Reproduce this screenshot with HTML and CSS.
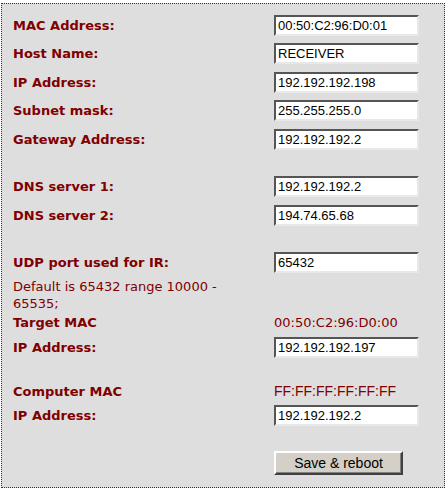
FILE: index.html
```html
<!DOCTYPE html>
<html>
<head>
<meta charset="utf-8">
<link rel="stylesheet" href="styles.css">
</head>
<body>
<form class="panel">
  <div class="row"><label class="lbl">MAC Address:</label><input class="field" value="00:50:C2:96:D0:01"></div>
  <div class="row"><label class="lbl">Host Name:</label><input class="field" value="RECEIVER"></div>
  <div class="row"><label class="lbl">IP Address:</label><input class="field" value="192.192.192.198"></div>
  <div class="row"><label class="lbl">Subnet mask:</label><input class="field" value="255.255.255.0"></div>
  <div class="row"><label class="lbl">Gateway Address:</label><input class="field" value="192.192.192.2"></div>
  <div class="spacer"></div>
  <div class="row"><label class="lbl">DNS server 1:</label><input class="field" value="192.192.192.2"></div>
  <div class="row"><label class="lbl">DNS server 2:</label><input class="field" value="194.74.65.68"></div>
  <div class="spacer"></div>
  <div class="row"><label class="lbl">UDP port used for IR:</label><input class="field" value="65432"></div>
  <div class="note">Default is 65432 range 10000 - 65535;</div>
  <div class="row text-row"><label class="lbl">Target MAC</label><span class="mac">00:50:C2:96:D0:00</span></div>
  <div class="row"><label class="lbl">IP Address:</label><input class="field" value="192.192.192.197"></div>
  <div class="spacer"></div>
  <div class="row text-row"><label class="lbl">Computer MAC</label><span class="mac2">FF:FF:FF:FF:FF:FF</span></div>
  <div class="row"><label class="lbl">IP Address:</label><input class="field" value="192.192.192.2"></div>
  <div class="actions"><button type="button" class="btn">Save &amp; reboot</button></div>
</form>
</body>
</html>
```
FILE: styles.css
```css
html, body {
  margin: 0;
  padding: 0;
  background: #ffffff;
}
.panel {
  box-sizing: border-box;
  margin: 3px 1px 0 1px;
  width: 444px;
  height: 485px;
  border: 1px dotted #333333;
  background: #dedede;
  padding: 7px 0 0 11px;
}
.row {
  display: grid;
  grid-template-columns: 261px 145px;
  align-items: center;
  height: 28.5px;
}
.text-row {
  height: 21px;
}
.spacer {
  height: 19px;
}
.lbl {
  font-family: "DejaVu Sans", Verdana, sans-serif;
  font-weight: bold;
  font-size: 13px;
  color: #800000;
}
.field {
  box-sizing: border-box;
  width: 145px;
  height: 21px;
  margin: 0;
  padding: 1px 2px;
  font-family: "Liberation Sans", Arial, sans-serif;
  font-size: 13px;
  color: #000;
  background: #fff;
  border-style: solid;
  border-width: 2px;
  border-color: #555555 #e8e8e8 #e8e8e8 #555555;
  outline: none;
}
.note {
  width: 238px;
  font-family: "DejaVu Sans", Verdana, sans-serif;
  font-size: 13px;
  line-height: 17px;
  color: #800000;
  padding-top: 1px;
}
.mac {
  font-family: "DejaVu Sans", Verdana, sans-serif;
  font-size: 13px;
  color: #800000;
}
.mac2 {
  font-family: "Liberation Sans", Arial, sans-serif;
  font-size: 14px;
  color: #800000;
}
.actions {
  padding: 21px 0 0 261px;
}
.btn {
  box-sizing: border-box;
  width: 129px;
  height: 24px;
  margin: 0;
  font-family: "Liberation Sans", Arial, sans-serif;
  font-size: 14px;
  color: #000;
  background: #d4d0c8;
  border-style: solid;
  border-width: 2px;
  border-color: #ffffff #404040 #404040 #ffffff;
  box-shadow: inset -1px -1px 0 #808080;
}
```
